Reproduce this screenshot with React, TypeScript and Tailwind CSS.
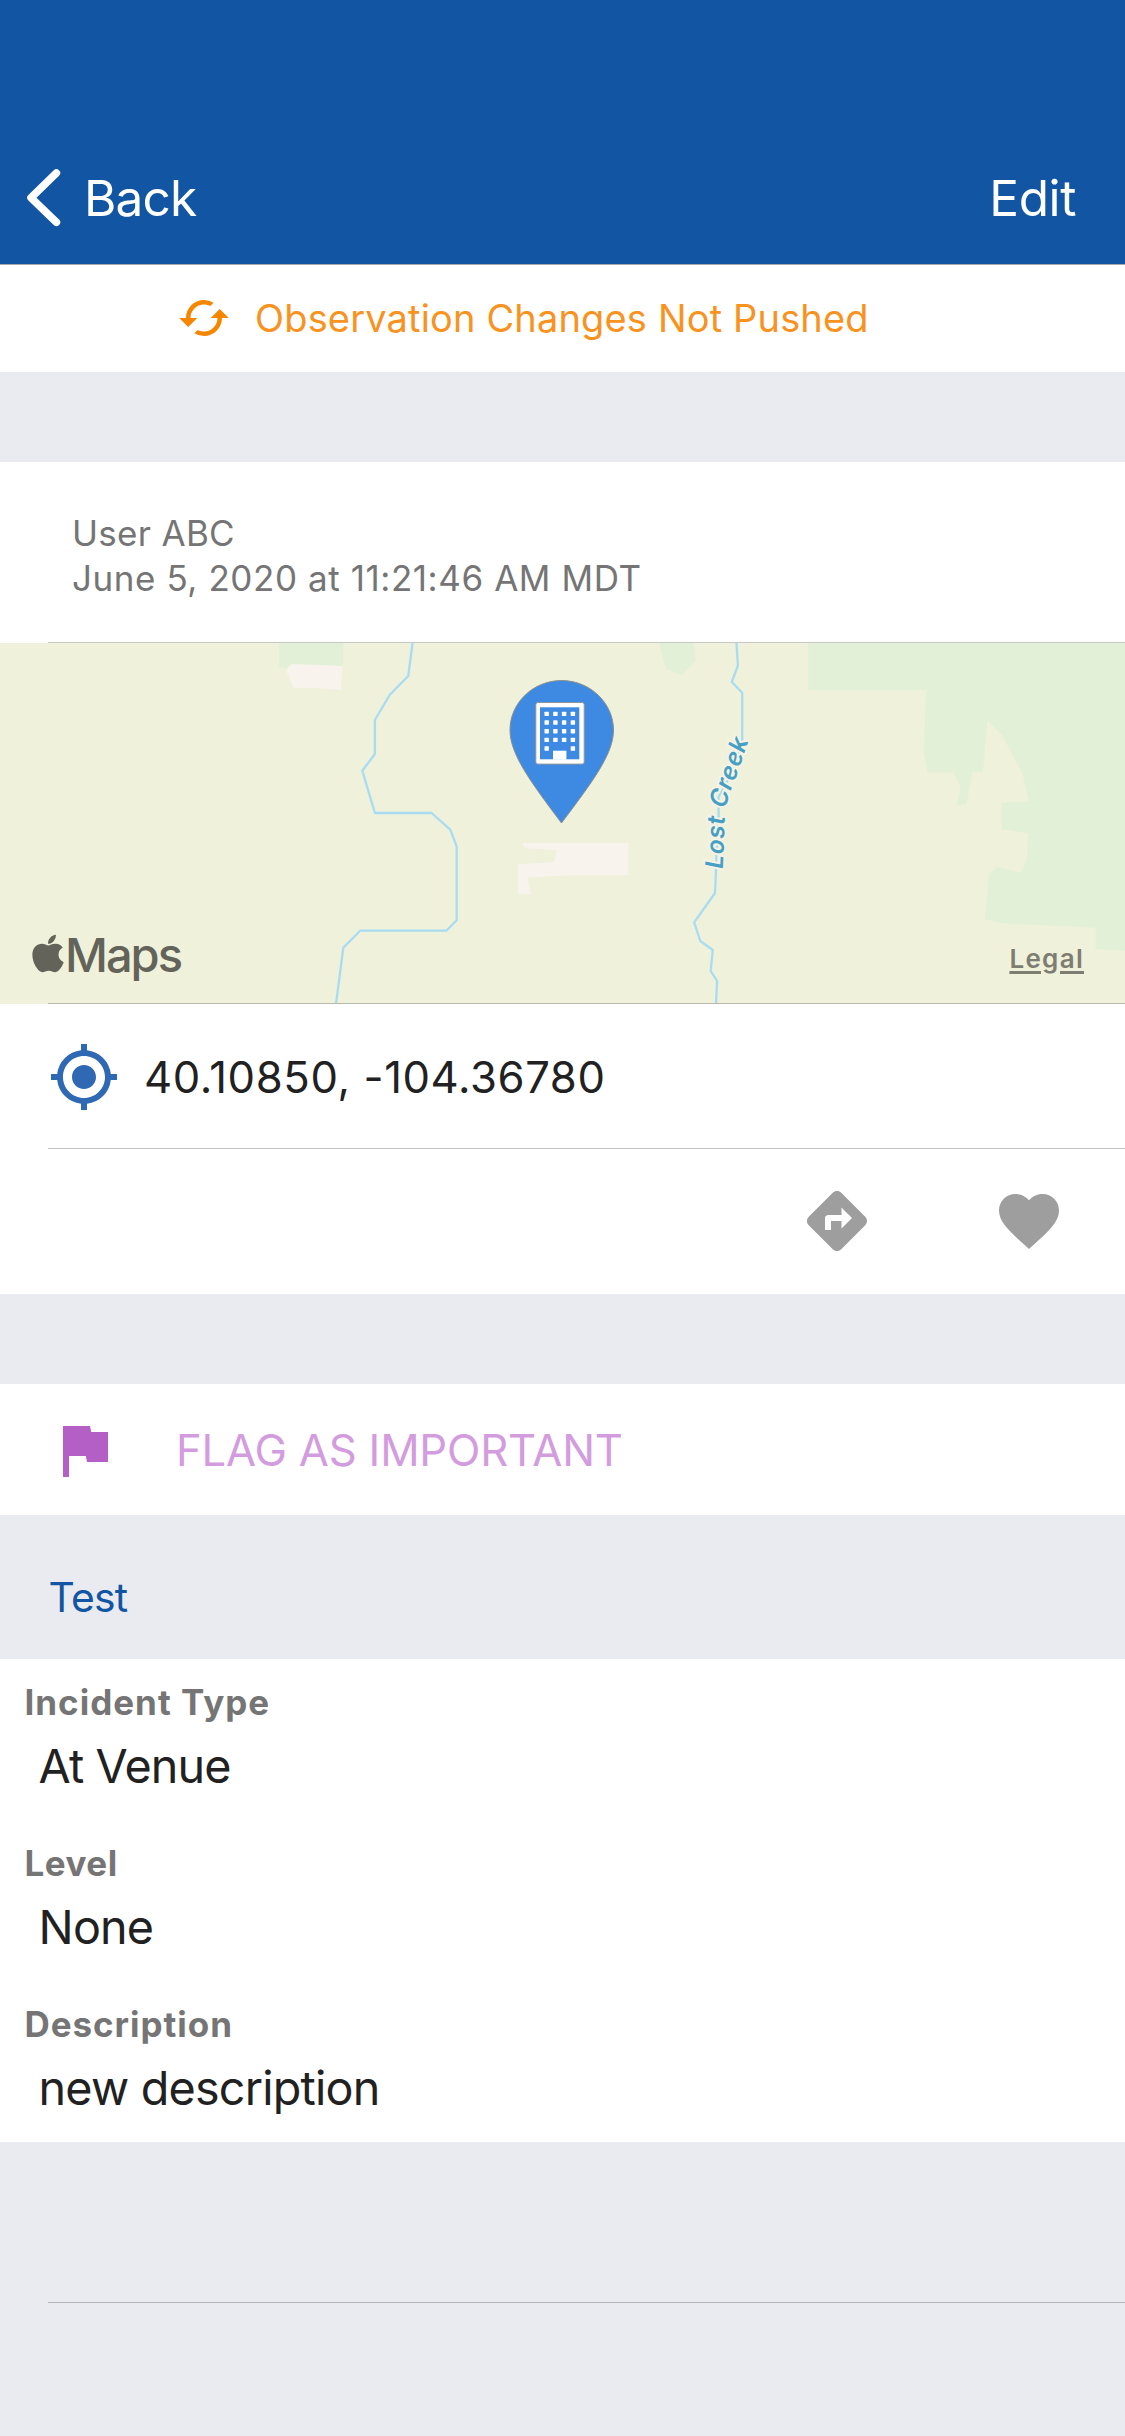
import { FaApple } from "react-icons/fa";
import { MdCached, MdDirections, MdFavorite, MdFlag, MdMyLocation } from "react-icons/md";

const fields = [
  { label: "Incident Type", value: "At Venue", labelTrack: "tracking-[1px]", valueTrack: "tracking-[-0.9px]" },
  { label: "Level", value: "None", labelTrack: "tracking-[0.5px]", valueTrack: "tracking-[-0.8px]" },
  { label: "Description", value: "new description", labelTrack: "tracking-[0.95px]", valueTrack: "tracking-[-0.78px]" },
];

const windowColumns = [544.5, 553.2, 561.9, 570.7];
const windowRows = [68.7, 77.3, 86, 94.7, 103.3];

function MapTerrain() {
  return (
    <svg className="block h-[361px] w-full" viewBox="0 0 1125 361" aria-hidden="true">
      <rect width="1125" height="361" fill="#eff1da" />
      <g fill="#e2f0d7">
        <path d="M279 0H343V23L291 21L286 25L279 24Z" />
        <path d="M659.4 0H693.5L695.3 17.7L682 32L665.9 26.3Z" />
        <path d="M808.2 0V46.7H926L924 108.7L927.5 129.3H953L960.8 144.7L956.2 162.7L966.6 160.7L972.3 129.3L983 129L987.4 77.3L1002 92.3L1022.5 130.3L1028.6 158L1001.4 160V186.3L1028.6 190.3L1026.8 216.3L1021 229.7L997 223.7L989 231.3L984.9 276.3L1001.4 280.3L1095.6 284.7V306L1125 308V0Z" />
      </g>
      <g fill="#f8f3ec">
        <path d="M292 21L342.5 23L340.8 47L317.8 45L293.7 44.7L285.8 27.3Z" />
        <path d="M522.3 200H628.3V232.3L556.7 232.7L527.3 234.7L531.3 251.3H518V221.3L554 219L556.7 207.3L524.7 205.3Z" />
      </g>
      <g fill="none" stroke="#a8dcf2" strokeWidth="2.3" strokeLinejoin="round">
        <path d="M412.5 0L408.3 33L389.6 52L374.9 77V111L362.3 127.7L374.9 170H431.6L450.3 186.7L456.7 203.7V277.3L446.3 287.7H360.1L343.3 304.7L336 361" />
        <path d="M736.5 0L737.9 22.7L731.8 39L742.2 49.7V100L728 137L718.6 153.7V177L716.4 210L716 227L715 250L694.2 279.3L700.3 298L712.8 307L710.7 328L717.1 338L716 361" />
      </g>
      <path id="creek-label" d="M722.8 226L725 172C726 158 732 145 737 131L752 88" fill="none" />
      <text
        className="font-['Inter'] text-[24.5px] font-semibold italic tracking-[0.6px]"
        fill="#479fc3"
        stroke="#f4f3e6"
        strokeWidth="4"
        strokeLinejoin="round"
        paintOrder="stroke"
      >
        <textPath href="#creek-label">Lost Creek</textPath>
      </text>
      <path
        d="M561.7 37.5C590 37.5 613.5 60 613.5 87C613.5 111 593 138 561.5 180C530 138 510 111 510 87C510 60 533 37.5 561.7 37.5Z"
        fill="#3e8ae2"
        stroke="#8b8f8c"
        strokeWidth="1"
      />
      <rect x="535.8" y="59.5" width="48.4" height="61.6" rx="2" fill="#fff" stroke="#8f959c" strokeWidth="1" />
      <rect x="540" y="64.3" width="39.3" height="52" fill="#3e8ae2" />
      <g fill="#fff">
        {windowRows.map((y, row) =>
          windowColumns.map((x, col) =>
            row === 4 && (col === 1 || col === 2) ? null : (
              <rect key={`${row}-${col}`} x={x} y={y} width="4.4" height="4.4" rx="0.6" />
            ),
          ),
        )}
        <rect x="553" y="107.7" width="13.4" height="9" />
      </g>
    </svg>
  );
}

export default function App() {
  return (
    <main className="flex h-[2436px] w-full flex-col bg-[#eaebf0] font-['Inter',sans-serif] text-[#212121]">
      <header className="flex h-[265px] items-start justify-between border-b border-[#a9a9ad] bg-[#1155a3] pt-[168px] pr-[49px] pl-[26px] text-[49.5px] leading-[60px] whitespace-nowrap text-white">
        <div className="flex">
          <svg className="h-[60px] w-[58px]" viewBox="0 0 58 60" fill="none" aria-hidden="true">
            <path d="M30.4 5.1L5 29.7L30.4 54.3" stroke="#fff" strokeWidth="7.6" strokeLinecap="round" strokeLinejoin="round" />
          </svg>
          <span className="tracking-[-0.8px]">Back</span>
        </div>
        <span className="tracking-[-0.4px]">Edit</span>
      </header>

      <section className="flex h-[107px] items-start bg-white pt-[26px] pl-[177px]">
        <MdCached className="size-[54px] text-[#f68500]" />
        <p className="mt-[3px] ml-6 text-[38px] leading-[48px] tracking-[0.16px] whitespace-nowrap text-[#f8931f]">
          Observation Changes Not Pushed
        </p>
      </section>

      <section className="mt-[90px] bg-white">
        <div className="h-[180px] pt-[49px] pl-[72px] text-[35px] leading-[45px] tracking-[0.57px] text-[#757575]">
          <p className="tracking-[0.3px]">User ABC</p>
          <p>June 5, 2020 at 11:21:46 AM MDT</p>
        </div>
        <div className="ml-12 h-px bg-[#c6c6c8]" />
        <div className="relative">
          <MapTerrain />
          <div className="absolute inset-0 flex items-start justify-between pr-[41px] pl-[32px]">
            <div className="mt-[284px] flex text-[#63635a]">
              <FaApple className="mt-[5px] h-[43px] w-[32px]" />
              <span className="ml-px text-[47px] leading-[56px] font-medium tracking-[-2px]">Maps</span>
            </div>
            <span className="mt-[300px] text-[26px] leading-8 font-semibold tracking-[1.3px] text-[#7d7d71] underline decoration-[3px] underline-offset-[3px]">
              Legal
            </span>
          </div>
          <div className="absolute right-0 bottom-0 left-12 h-px bg-[#b7baac]" />
        </div>
        <div className="flex h-[144px] items-start pt-[37px] pl-12">
          <MdMyLocation className="size-[72px] text-[#3069b3]" />
          <p className="mt-[10px] ml-6 text-[43.6px] leading-[54px] tracking-[0.62px]">40.10850, -104.36780</p>
        </div>
        <div className="ml-12 h-px bg-[#c6c6c8]" />
        <div className="flex h-[145px] items-start justify-end gap-[120px] pt-9 pr-[60px] text-[#9e9e9e]">
          <MdDirections className="size-[72px]" />
          <MdFavorite className="size-[72px]" />
        </div>
      </section>

      <section className="mt-[90px] flex h-[131px] items-start bg-white pt-[30px] pl-12">
        <MdFlag className="size-[72px] text-[#b45fc5]" />
        <p className="mt-[10px] ml-[56px] text-[43.6px] leading-[54px] tracking-[-0.18px] text-[#d39cde]">
          FLAG AS IMPORTANT
        </p>
      </section>

      <h2 className="h-[144px] pt-[57px] pl-[48.5px] text-[40.8px] leading-[50px] tracking-[-0.7px] text-[#1155a3]">Test</h2>

      <dl className="bg-white">
        {fields.map((f) => (
          <div key={f.label} className="flex h-[161px] flex-col gap-[13px] pt-[21px]">
            <dt className={`pl-[24.5px] text-[35px] leading-[45px] font-bold text-[#757575] ${f.labelTrack}`}>{f.label}</dt>
            <dd className={`pl-[38.5px] text-[46.7px] leading-[56px] ${f.valueTrack}`}>{f.value}</dd>
          </div>
        ))}
      </dl>

      <div className="mt-[160px] ml-12 h-px shrink-0 bg-[#b5b5bb]" />
    </main>
  );
}
